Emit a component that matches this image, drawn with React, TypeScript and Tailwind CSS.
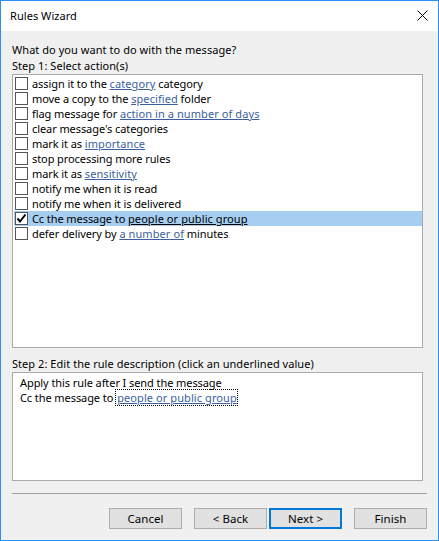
const linkClass = "text-[#3b5f9e] underline tracking-[0.08px]";

function Link({ children }: { children: React.ReactNode }) {
  return <span className={linkClass}>{children}</span>;
}

function Checkbox({ checked }: { checked?: boolean }) {
  return (
    <span className="flex h-[13px] w-[13px] shrink-0 items-center justify-center border border-[#555] bg-white">
      {checked && (
        <svg width="11" height="11" viewBox="0 0 11 11">
          <path d="M1.5 5.5 L4 8.5 L9.5 1.5" fill="none" stroke="#000" strokeWidth="2" />
        </svg>
      )}
    </span>
  );
}

function Row({ children, checked, selected }: { children: React.ReactNode; checked?: boolean; selected?: boolean }) {
  return (
    <div className={`flex h-[15px] items-center gap-[4px] pl-[1px] whitespace-pre ${selected ? "bg-[#a6cef0]" : ""}`}>
      <Checkbox checked={checked} />
      <span className={`tracking-[-0.08px] ${selected ? "[&>span]:text-black" : ""}`}>{children}</span>
    </div>
  );
}

function Button({ children, primary }: { children: React.ReactNode; primary?: boolean }) {
  return (
    <button
      className={`flex h-[21px] w-[73px] items-center justify-center bg-[#e1e1e1] text-[11.5px] text-black ${
        primary ? "border-2 border-[#0078d7]" : "border border-[#adadad]"
      }`}
    >
      {children}
    </button>
  );
}

export default function App() {
  return (
    <div className="flex h-[541px] w-[439px] flex-col overflow-hidden border border-[#2b90f5] bg-[#f0f0f0] font-['Noto_Sans',sans-serif] text-[11px] leading-[15px] tracking-[0.05px] text-black">
      <div className="flex h-[30px] shrink-0 items-center justify-between bg-white pb-[2px] pl-[9px] pr-[10px]">
        <span>Rules Wizard</span>
        <svg width="11" height="11" viewBox="0 0 11 11">
          <path d="M0.5 0.5 L10.5 10.5 M10.5 0.5 L0.5 10.5" stroke="#000" strokeWidth="1" />
        </svg>
      </div>

      <div className="flex flex-1 flex-col px-[11px]">
        <p className="mt-[11px]">What do you want to do with the message?</p>
        <p className="mt-[1px]">Step 1: Select action(s)</p>

        <div className="mt-[1px] h-[274px] w-[411px] border border-[#a9a9a9] bg-white p-[1px] pr-0">
          <Row>assign it to the <Link>category</Link> category</Row>
          <Row>move a copy to the <Link>specified</Link> folder</Row>
          <Row>flag message for <Link>action in a number of days</Link></Row>
          <Row>clear message's categories</Row>
          <Row>mark it as <Link>importance</Link></Row>
          <Row>stop processing more rules</Row>
          <Row>mark it as <Link>sensitivity</Link></Row>
          <Row>notify me when it is read</Row>
          <Row>notify me when it is delivered</Row>
          <Row checked selected>Cc the message to <Link>people or public group</Link></Row>
          <Row>defer delivery by <Link>a number of</Link> minutes</Row>
        </div>

        <p className="mt-[8px]">Step 2: Edit the rule description (click an underlined value)</p>

        <div className="mt-[1px] h-[109px] w-[411px] border border-[#a9a9a9] bg-white pt-[2px] pl-[7px]">
          <p className="tracking-[-0.08px]">Apply this rule after I send the message</p>
          <p className="whitespace-pre tracking-[-0.08px]">
            Cc the message to<span className="ml-[3px] pl-[1px] outline-1 outline-dotted outline-black"><Link>people or public group</Link></span>
          </p>
        </div>

        <div className="mt-[12px] h-[1px] bg-[#a0a0a0]" />

        <div className="mt-[14px] flex justify-end">
          <Button>Cancel</Button>
          <div className="ml-[12px] flex gap-[2px]">
            <Button>&lt; Back</Button>
            <Button primary>Next &gt;</Button>
          </div>
          <div className="ml-[12px]">
            <Button>Finish</Button>
          </div>
        </div>
      </div>
    </div>
  );
}
